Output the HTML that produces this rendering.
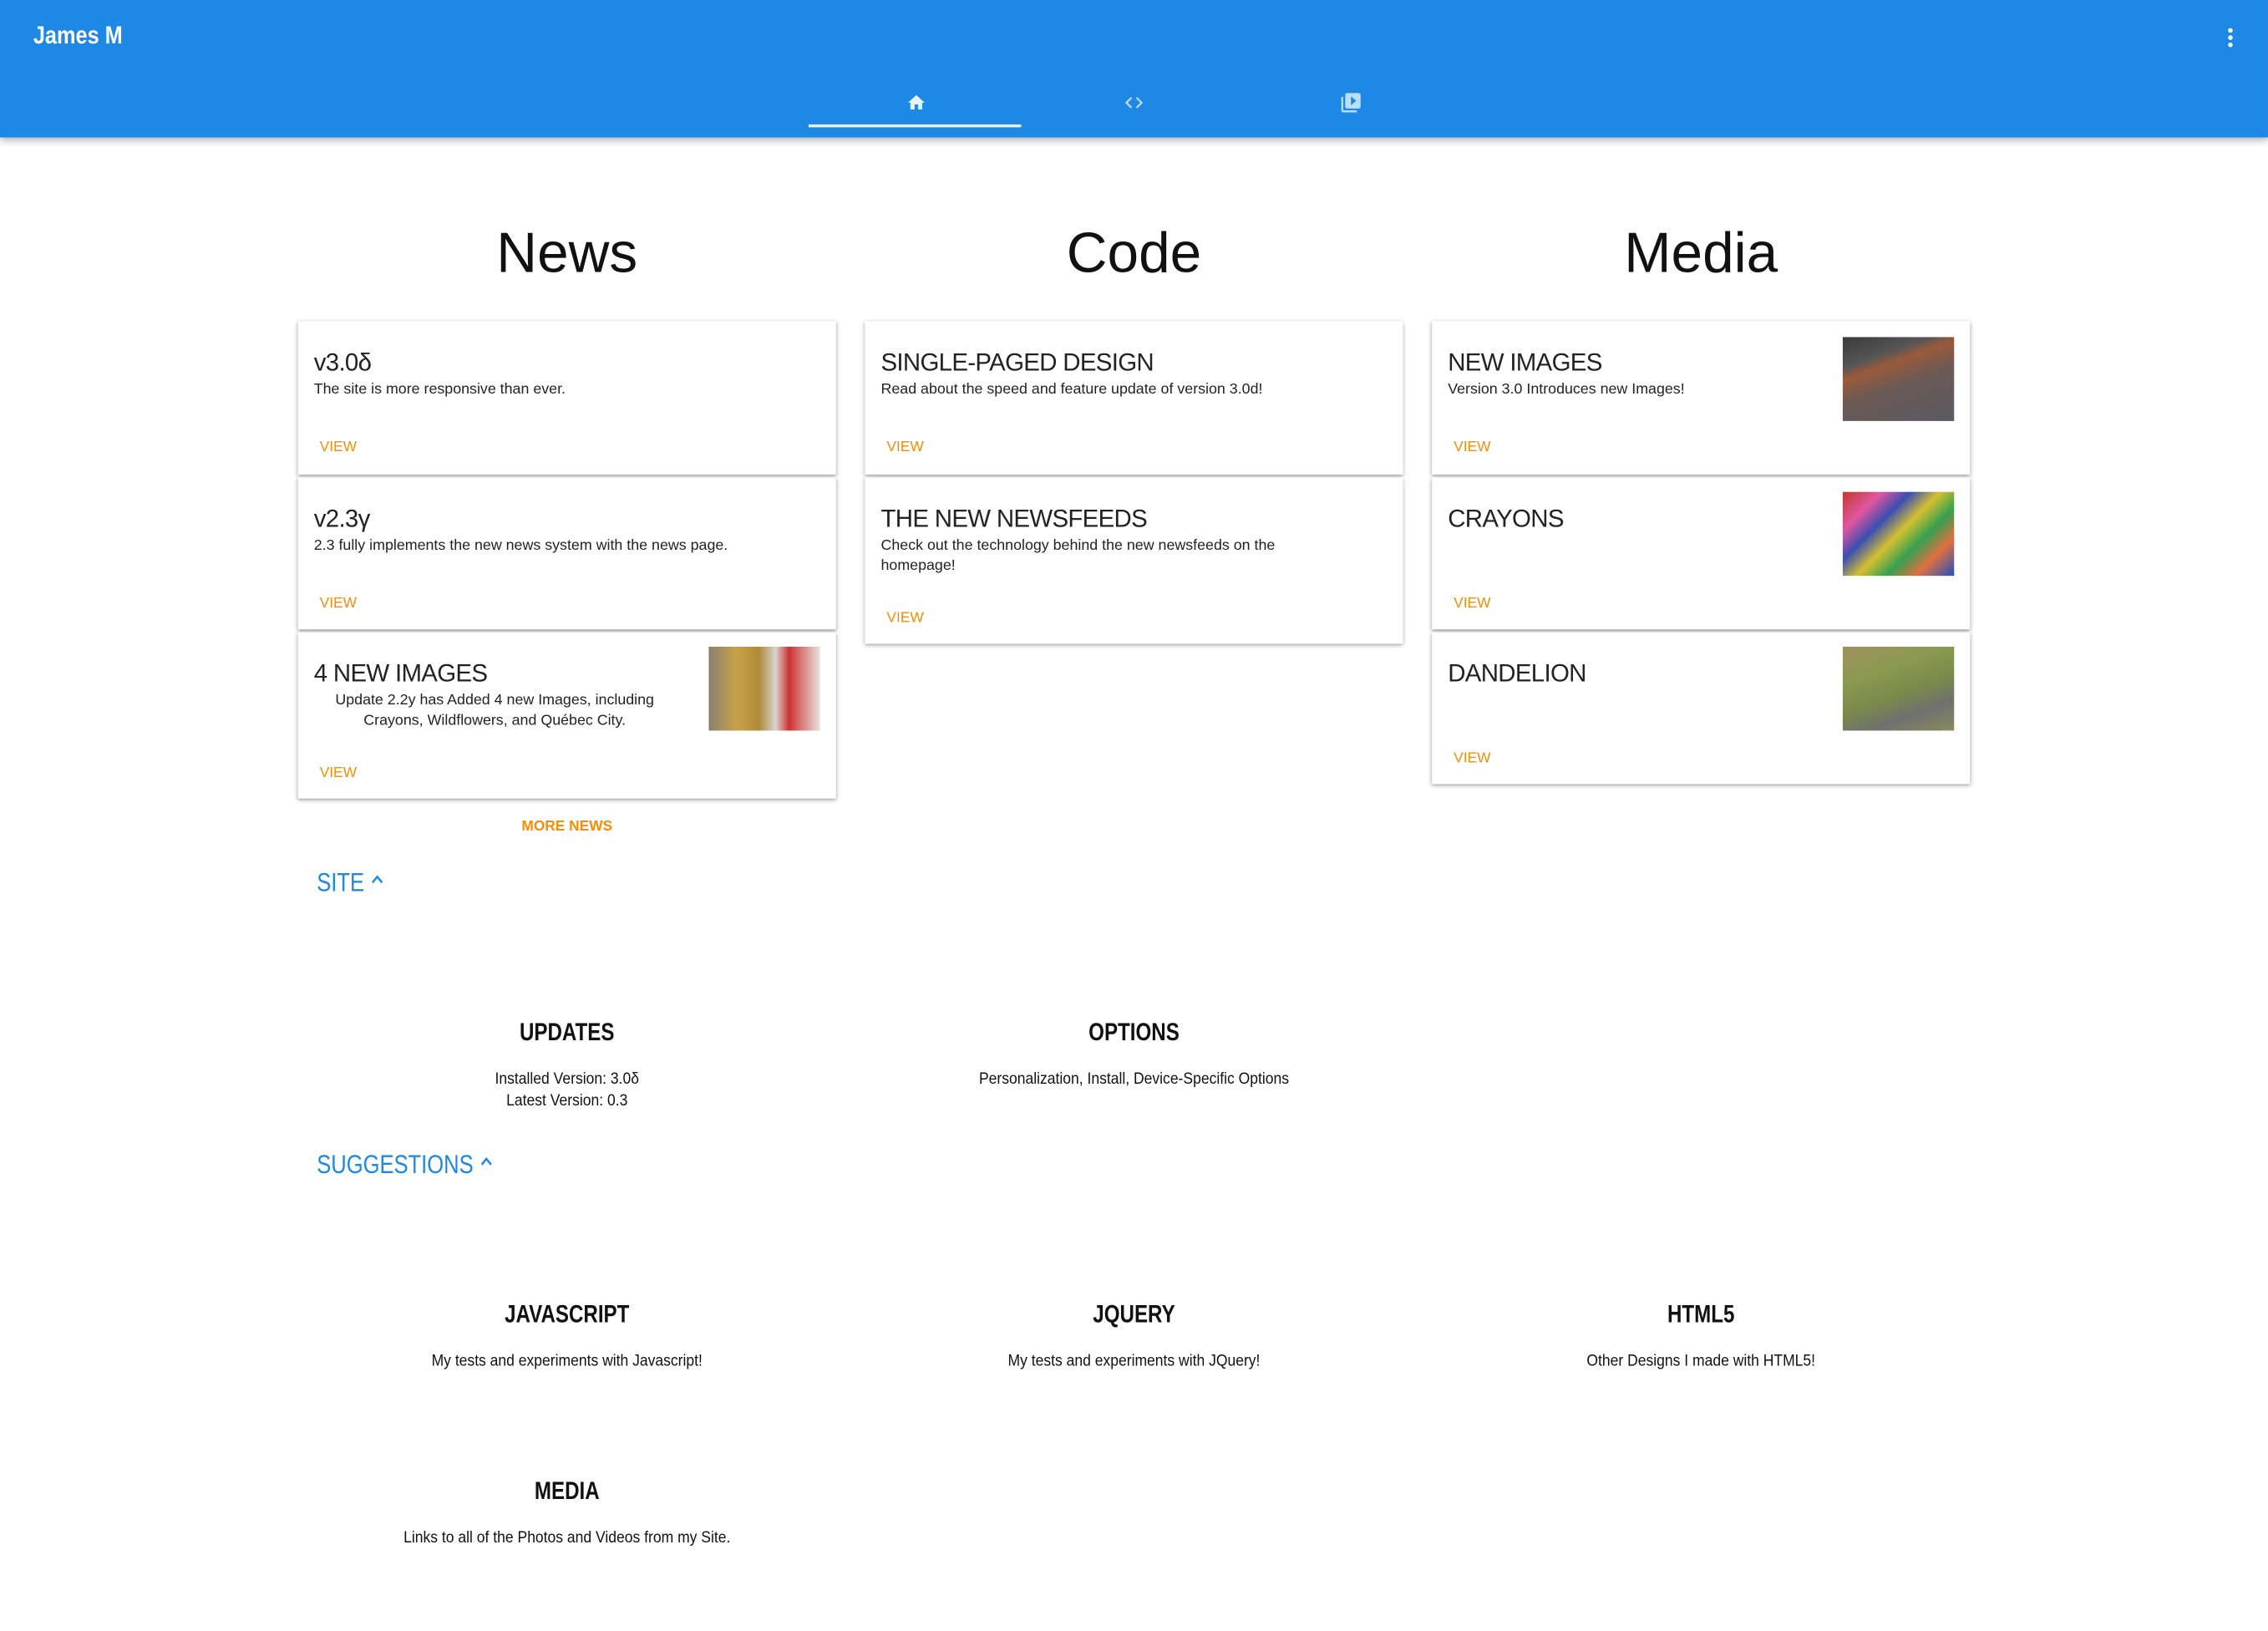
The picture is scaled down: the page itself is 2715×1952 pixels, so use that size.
<!DOCTYPE html>
<html><head><meta charset="utf-8"><style>
html,body{margin:0;padding:0;background:#fff;overflow:hidden}
body{width:2715px;height:1952px;position:relative;font-family:"Liberation Sans",sans-serif}
#w{position:absolute;left:0;top:0;width:1568px;height:1128px;transform:scale(1.7315);transform-origin:0 0}
.hdr{position:absolute;left:0;top:0;width:1568px;height:95px;background:#1e88e5;box-shadow:0 2px 5px rgba(0,0,0,.3)}
.ab{position:absolute}
.h1{position:absolute;font-size:39px;color:#111;width:372px;text-align:center;top:151px;line-height:50px}
.card{position:absolute;background:#fff;width:372px;box-shadow:0 1px 3px rgba(0,0,0,.35),0 1px 1px rgba(0,0,0,.1)}
.card .t{position:absolute;left:11px;top:19px;font-size:17px;color:#222;letter-spacing:-.4px}
.card .s{position:absolute;left:11px;top:41px;font-size:10.3px;color:#222;line-height:14px;width:310px}
.card .v{position:absolute;left:15px;font-size:10px;color:#fb8c00;top:82px}
.card .img{position:absolute;left:284px;top:11px;width:77px;height:58px}
.sec{position:absolute;text-align:center;width:372px;color:#111}
.sec b{display:block;font-size:17px;font-weight:bold;transform:scaleX(.82)}
.sec span{display:block;font-size:11px;line-height:15px;transform:scaleX(.92)}
.blue{position:absolute;left:219px;font-size:18px;color:#1e88e5;transform:scaleX(.82);transform-origin:0 0}
</style></head><body><div id="w">
<div class="hdr">
 <div class="ab" style="left:23px;top:15px;color:#fff;font-size:17px;font-weight:bold;transform:scaleX(.86);transform-origin:0 0">James M</div>
 <svg class="ab" style="left:1536px;top:18px" width="12" height="16" viewBox="0 0 12 16"><circle cx="6" cy="3" r="1.6" fill="#fff"/><circle cx="6" cy="8" r="1.6" fill="#fff"/><circle cx="6" cy="13" r="1.6" fill="#fff"/></svg>
 <svg class="ab" style="left:626px;top:64px" width="15" height="14" viewBox="0 0 24 24"><path d="M10 20v-6h4v6h5v-8h3L12 3 2 12h3v8z" fill="#e3f2fd"/></svg>
 <svg class="ab" style="left:776px;top:64px" width="16" height="14" viewBox="0 0 24 24"><path d="M9 6l-6 6 6 6M15 6l6 6-6 6" stroke="#bbdefb" stroke-width="2.2" fill="none"/></svg>
 <svg class="ab" style="left:926px;top:63px" width="16" height="16" viewBox="0 0 24 24"><path d="M4 6H2v14c0 1.1.9 2 2 2h14v-2H4V6z" fill="#bbdefb"/><rect x="6" y="2" width="16" height="16" rx="2" fill="#bbdefb"/><path d="M12 5.5v9l5.5-4.5z" fill="#1e88e5"/></svg>
 <div class="ab" style="left:559px;top:86px;width:147px;height:2px;background:#e3f2fd"></div>
</div>

<div class="h1" style="left:206px">News</div>
<div class="h1" style="left:598px">Code</div>
<div class="h1" style="left:990px">Media</div>

<div class="card" style="left:206px;top:222px;height:106px"><div class="t">v3.0δ</div><div class="s">The site is more responsive than ever.</div><div class="v">VIEW</div></div>
<div class="card" style="left:206px;top:330px;height:105px"><div class="t">v2.3γ</div><div class="s" style="width:340px">2.3 fully implements the new news system with the news page.</div><div class="v">VIEW</div></div>
<div class="card" style="left:206px;top:437px;height:115px"><div class="t">4 NEW IMAGES</div><div class="s" style="text-align:center;width:250px">Update 2.2y has Added 4 new Images, including Crayons, Wildflowers, and Québec City.</div><div class="v" style="top:92px">VIEW</div>
 <div class="img" style="top:10px;background:linear-gradient(90deg,#8a7f70 0%,#c9a24a 25%,#b08a3a 45%,#d8d4d0 60%,#c33 72%,#e8e4e0 100%)"></div></div>
<div class="ab" style="left:206px;top:566px;width:372px;text-align:center;font-size:10px;color:#fb8c00;font-weight:bold">MORE NEWS</div>

<div class="card" style="left:598px;top:222px;height:106px"><div class="t">SINGLE-PAGED DESIGN</div><div class="s" style="width:340px">Read about the speed and feature update of version 3.0d!</div><div class="v">VIEW</div></div>
<div class="card" style="left:598px;top:330px;height:115px"><div class="t">THE NEW NEWSFEEDS</div><div class="s" style="width:295px">Check out the technology behind the new newsfeeds on the homepage!</div><div class="v" style="top:92px">VIEW</div></div>

<div class="card" style="left:990px;top:222px;height:106px"><div class="t">NEW IMAGES</div><div class="s">Version 3.0 Introduces new Images!</div><div class="v">VIEW</div>
 <div class="img" style="background:linear-gradient(160deg,#3a3a3a 0%,#555 25%,#9a5a3a 35%,#6b5a55 55%,#5a5a64 100%)"></div></div>
<div class="card" style="left:990px;top:330px;height:105px"><div class="t">CRAYONS</div><div class="v">VIEW</div>
 <div class="img" style="top:10px;background:linear-gradient(135deg,#c0392b,#e056a0 20%,#3a4fb0 35%,#d4c030 50%,#35a050 65%,#e07040 80%,#2050c0)"></div></div>
<div class="card" style="left:990px;top:437px;height:105px"><div class="t">DANDELION</div><div class="v">VIEW</div>
 <div class="img" style="top:10px;background:linear-gradient(160deg,#a09060,#8a9a50 30%,#7a8a4a 55%,#707070 75%,#8a8a60)"></div></div>

<div class="blue" style="top:600px">SITE <svg width="12" height="10" viewBox="0 0 12 10" style="vertical-align:3px"><path d="M2 7l4-4 4 4" stroke="#1e88e5" stroke-width="1.6" fill="none"/></svg></div>
<div class="sec" style="left:206px;top:704px"><b>UPDATES</b><span style="margin-top:15px">Installed Version: 3.0δ</span><span>Latest Version: 0.3</span></div>
<div class="sec" style="left:598px;top:704px"><b>OPTIONS</b><span style="margin-top:15px">Personalization, Install, Device-Specific Options</span></div>

<div class="blue" style="top:795px">SUGGESTIONS <svg width="12" height="10" viewBox="0 0 12 10" style="vertical-align:3px"><path d="M2 7l4-4 4 4" stroke="#1e88e5" stroke-width="1.6" fill="none"/></svg></div>
<div class="sec" style="left:206px;top:899px"><b>JAVASCRIPT</b><span style="margin-top:15px">My tests and experiments with Javascript!</span></div>
<div class="sec" style="left:598px;top:899px"><b>JQUERY</b><span style="margin-top:15px">My tests and experiments with JQuery!</span></div>
<div class="sec" style="left:990px;top:899px"><b>HTML5</b><span style="margin-top:15px">Other Designs I made with HTML5!</span></div>
<div class="sec" style="left:206px;top:1021px"><b>MEDIA</b><span style="margin-top:15px">Links to all of the Photos and Videos from my Site.</span></div>
</div></body></html>
